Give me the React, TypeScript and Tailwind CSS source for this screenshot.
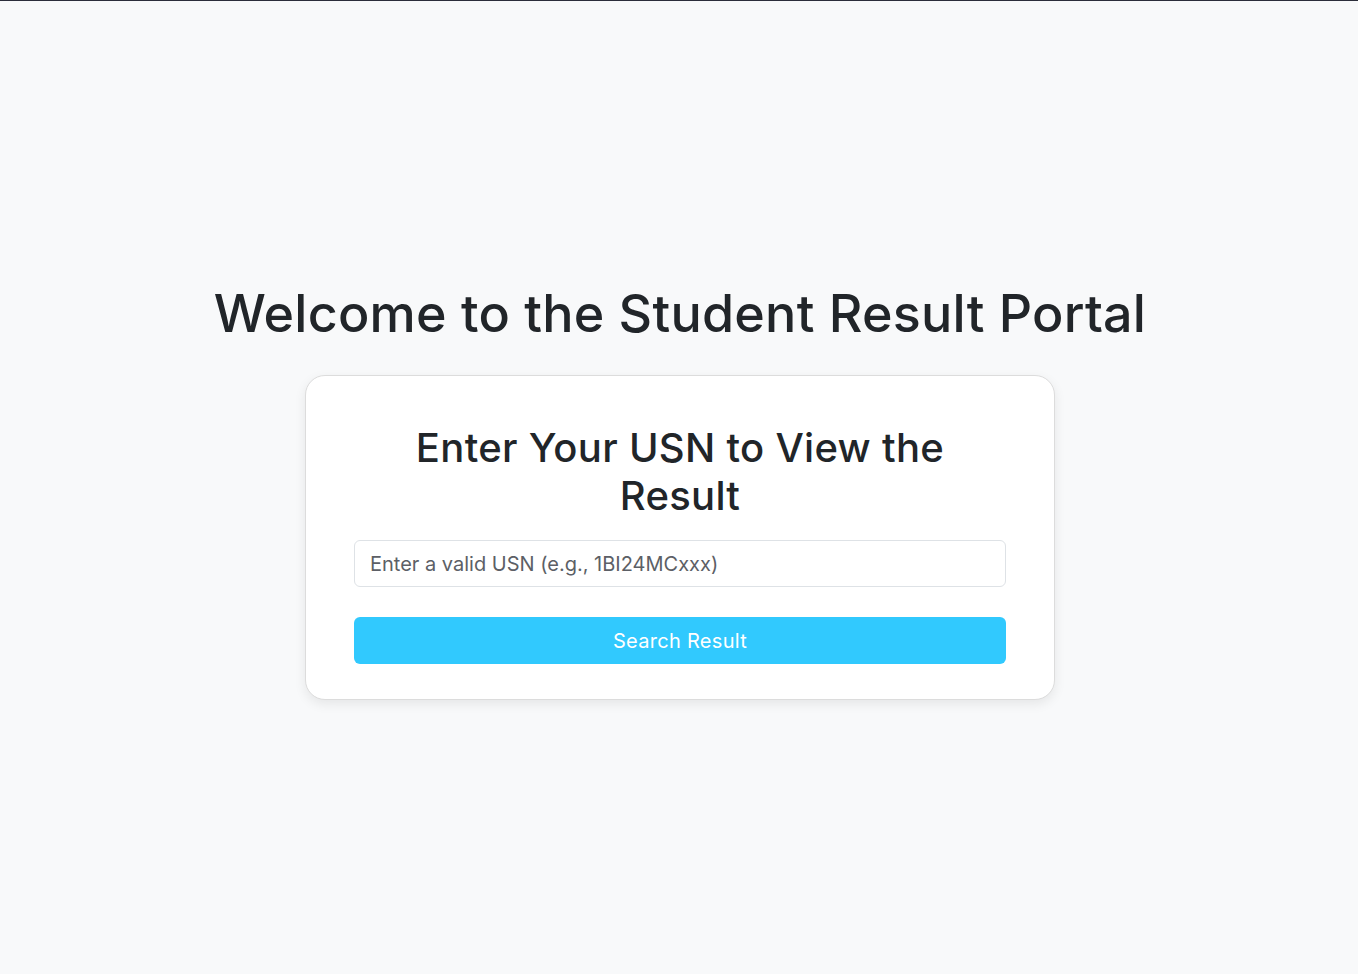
import React from "react";

const App: React.FC = () => {
  return (
    <div
      className="min-h-[974px] bg-[#f8f9fa] border-t border-[#2b2d3a] pt-[8px] pl-[2px] flex flex-col items-center justify-center text-[#212529]"
      style={{ fontFamily: "Inter, 'Noto Sans', sans-serif" }}
    >
      <h1 className="text-[52px] leading-[62px] font-medium mb-[30px] tracking-[0.25px]">
        Welcome to the Student Result Portal
      </h1>
      <div className="w-[750px] bg-white border border-[#dcdcdc] rounded-[20px] shadow-[0_4px_12px_rgba(0,0,0,0.08)] px-[48px] pt-[48px] pb-[35px]">
        <h2 className="text-[40px] leading-[48px] font-medium text-center mb-[20px] tracking-[0.3px]">
          Enter Your USN to View the
          <br />
          Result
        </h2>
        <input
          type="text"
          placeholder="Enter a valid USN (e.g., 1BI24MCxxx)"
          className="w-full h-[47px] border border-[#dee2e6] rounded-[6px] px-[15px] text-[20px] placeholder:text-[#5c5f66] outline-none"
        />
        <button className="mt-[30px] w-full h-[47px] bg-[#31c9fe] text-white text-[20px] tracking-[0.3px] rounded-[6px]">
          Search Result
        </button>
      </div>
    </div>
  );
};

export default App;
